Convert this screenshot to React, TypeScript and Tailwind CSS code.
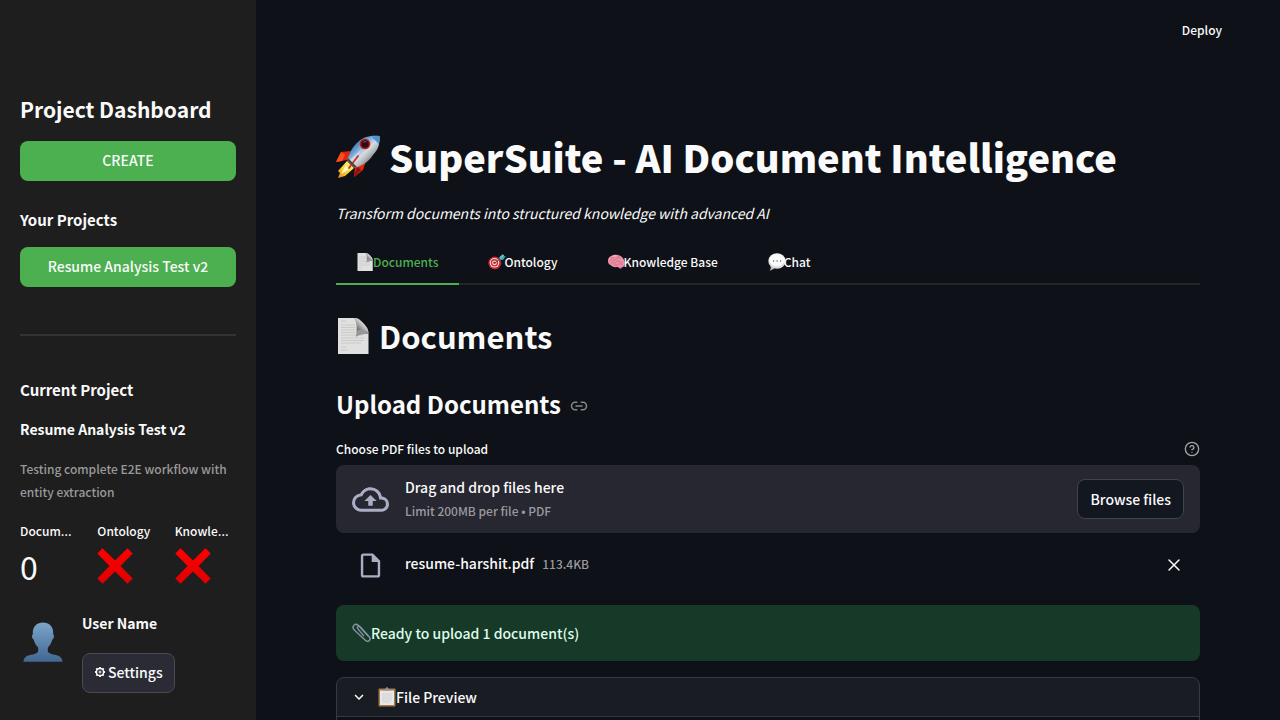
import type { ReactNode } from "react";
import { CircleHelp, Link2, X } from "lucide-react";
import { MdExpandMore, MdOutlineCloudUpload, MdOutlineInsertDriveFile } from "react-icons/md";

function Rocket() {
  return (
    <svg viewBox="0 0 44 44" className="h-11 w-11 shrink-0" aria-hidden="true">
      <defs>
        <linearGradient id="rk-body" x1="0.2" y1="0.2" x2="0.8" y2="0.8">
          <stop offset="0" stopColor="#2f69ad" />
          <stop offset="0.3" stopColor="#78a9d8" />
          <stop offset="0.55" stopColor="#d5dde2" />
          <stop offset="0.75" stopColor="#aeb4b6" />
          <stop offset="1" stopColor="#565c60" />
        </linearGradient>
        <linearGradient id="rk-flame" x1="1" y1="0" x2="0" y2="1">
          <stop offset="0" stopColor="#fff79a" />
          <stop offset="0.55" stopColor="#fbd534" />
          <stop offset="1" stopColor="#e8871a" />
        </linearGradient>
      </defs>
      <path d="M15 16 5 17 0 27l11-2z" fill="#e5220c" />
      <path d="M5 17 0 27l6-1 3-6z" fill="#f4511e" />
      <path d="m30 26-3 9-9 7 1-10z" fill="#e5220c" />
      <path d="m21 31 4 4-7 7z" fill="#8e1208" />
      <path d="M11 26 2 36l2 2-2 5 7-2 9-8z" fill="url(#rk-flame)" />
      <path d="m10 30-5 9 8-5z" fill="#fffbc8" />
      <path d="M43.500 1C34 0 27 2 22 7c-5 4-8 10-11 18l8 8c9-3 14-7 18-13 5-5 7-11 6.500-19z" fill="url(#rk-body)" />
      <path d="M35 1.500c3-.7 6-.7 8.500-.5.2 3 0 5-.6 8z" fill="#4f92d4" />
      <path d="m18 21 8-7-9 14-5-1z" fill="#f4f5f3" opacity="0.5" />
      <path d="m22 21-9 12" stroke="#c4352a" strokeWidth="1.800" strokeLinecap="round" />
      <path d="m11 25 8 8 2-1-9-9z" fill="#5c4037" />
      <circle cx="29" cy="9" r="5.300" fill="#c3180c" />
      <circle cx="29" cy="9" r="3.700" fill="#290c16" />
      <path d="M27 7.500c1-1 2.500-1.200 3.500-.5" stroke="#7e8ba0" strokeWidth="0.700" fill="none" />
    </svg>
  );
}

function PageSheet({ className }: { className: string }) {
  return (
    <svg viewBox="0 0 32 36" className={className} aria-hidden="true">
      <defs>
        <linearGradient id="sheet-fold" x1="0.2" y1="0.8" x2="0.8" y2="0.2">
          <stop offset="0" stopColor="#666" />
          <stop offset="0.5" stopColor="#b9b9b9" />
          <stop offset="1" stopColor="#fff" />
        </linearGradient>
      </defs>
      <path d="M1 0h17c3 0 5 2 7 4l5 6c1 2 1.500 3 1.500 6v20H1z" fill="#e0e0e0" />
      <path d="M4 3h5M4 7h14M4 9.500h14M4 12h14M4 14.500h14M4 17h22M4 20h23M4 22.500h23M4 25h20M4 29h5M4 32h7" stroke="#cacaca" strokeWidth="1" />
      <path d="M16 0c4 1 4 9 3 19 4-3 8-3 12.500-3C31 10 25 3 16 0z" fill="#666" opacity="0.6" />
      <path d="M17 0c3 3 3.500 7 3 12.500 4-1.500 8-.5 11.500 2C31 9 25 2 17 0z" fill="url(#sheet-fold)" />
    </svg>
  );
}

function Target() {
  return (
    <svg viewBox="0 0 18 18" className="-mr-0.5 h-[18px] w-[18px]" aria-hidden="true">
      <circle cx="6.800" cy="10" r="6.500" fill="#c9222d" />
      <circle cx="6.500" cy="9.800" r="4.800" fill="#f0e7e5" />
      <circle cx="6.500" cy="9.800" r="3.700" fill="#cf2934" />
      <circle cx="6.500" cy="9.800" r="2.400" fill="#f4e5e1" />
      <circle cx="6.500" cy="9.800" r="1.300" fill="#c92430" />
      <path d="m7 10 7-6" stroke="#3b5b65" strokeWidth="1" />
      <path d="M11 4.500 14.500 1l.8 2 2.400.3L15 7l-2.800-.2z" fill="#42a9b5" />
      <path d="m12 5 4-3" stroke="#81d7db" strokeWidth="1" />
    </svg>
  );
}

function Brain() {
  return (
    <svg viewBox="0 0 18 18" className="-mr-0.5 h-[18px] w-[18px]" aria-hidden="true">
      <path d="M11 12.500c0 1.500 1.200 3 2.700 3.700 1-.4.300-2 .8-3.200z" fill="#b25a6d" />
      <path d="M1 8C.8 5 3 2.800 6 2.200c4-1.100 8 .1 10 3.100 2 2.600 2.200 6.500.7 8.200-2 1.800-4.500 1.200-6.300.5C7 14.600 4.500 13.200 3.500 12 1.800 11.500.9 10 1 8z" fill="#ec8fa5" />
      <path d="M4 4.500c1.500-.5 2 1 3.500.3M2.500 7.500c2-1.500 3 .8 5-.2s1.500-2.800 4-2.300M4 10c1.500-.8 3 .8 4.500-.3S10 7 12 8s2 2 4 1M7 12.500c1.500-1.500 3 0 4.500-1.200s2.500-.2 4 .2M10 3c.5 1.500 2.500.5 3 2.200" fill="none" stroke="#c9687f" strokeWidth="0.700" />
      <path d="M5 3.500c1-.6 3-.9 4.500-.6M2 6.500l1-1.200" stroke="#ffc9d2" fill="none" strokeWidth="0.800" />
    </svg>
  );
}

function Bubble() {
  return (
    <svg viewBox="0 0 18 18" className="-mr-0.5 h-[18px] w-[18px]" aria-hidden="true">
      <path d="M2.500 13c.8 2-.1 3.500-.9 4.500 2.300-.3 4-1.200 4.700-2.500z" fill="#b9b9b9" />
      <ellipse cx="9" cy="8" rx="8.700" ry="7.800" fill="#dedede" />
      <ellipse cx="9" cy="7" rx="7.700" ry="6.300" fill="#fbfbfb" />
      <path d="M5 8h1.200M8.500 8h1.200M12 8h1.200" stroke="#777" strokeWidth="1.400" />
    </svg>
  );
}

function Cross() {
  return (
    <svg viewBox="0 0 36 36" className="h-9 w-9" role="img" aria-label="Not ready">
      <defs>
        <linearGradient id="cross-red" x1="0" y1="0" x2="0" y2="1">
          <stop offset="0" stopColor="#ff0000" />
          <stop offset="1" stopColor="#df0000" />
        </linearGradient>
      </defs>
      <path d="M5.500.3 18 12.500 30.500.3 35.700 5.500 23.500 18l12.200 12.500-5.200 5.200L18 23.500 5.500 35.700.3 30.500 12.500 18 .3 5.500z" fill="url(#cross-red)" />
    </svg>
  );
}

function Avatar() {
  return (
    <svg viewBox="0 0 40 40" className="h-10 w-10" aria-hidden="true">
      <defs>
        <linearGradient id="avatar-blue" x1="0" y1="0" x2="0" y2="1">
          <stop offset="0" stopColor="#7ba5c9" />
          <stop offset="1" stopColor="#426791" />
        </linearGradient>
      </defs>
      <path d="M20 .5c-6 0-10.200 4-10.200 10v2.300c-1 0-1 1.500-.5 3 .3 1.200.8 1.800 1.400 1.800.8 3.500 2.500 6.300 4.500 8.200v3c0 2-2 3-5.200 3.600C4.500 33.300.8 34.500.5 39.700h39c-.3-5.200-4-6.400-9.500-7.300-3.200-.6-5.200-1.600-5.200-3.600v-3c2-1.900 3.700-4.700 4.500-8.200.6 0 1.100-.6 1.400-1.800.5-1.500.5-3-.5-3v-2.300c0-6-4.200-10-10.200-10z" fill="url(#avatar-blue)" />
    </svg>
  );
}

function Gear() {
  return (
    <svg viewBox="0 0 12 12" className="h-3 w-3" fill="none" stroke="#fafafa" aria-hidden="true">
      <circle cx="6" cy="6" r="3.600" strokeWidth="1.500" />
      <circle cx="6" cy="6" r="1" strokeWidth="1" />
      <path d="M6 1v1.500M6 9.500V11M1 6h1.500M9.500 6H11M2.300 2.300l1.200 1.200M8.500 8.500l1.200 1.200M9.700 2.300 8.500 3.500M3.500 8.500 2.300 9.700" strokeWidth="1.800" />
    </svg>
  );
}

function Paperclip() {
  const wire = "M11.500 12.500 6 6C4.200 3.800 6.800 2 8.500 4l8.700 9.800c2.500 3.200-1.200 6.200-4 3.400L2.200 7C-.8 3.500 2.800-.3 6.200 2.200L16 13";
  return (
    <svg viewBox="0 0 20 20" className="-mr-px h-5 w-5" fill="none" strokeLinecap="round" aria-hidden="true">
      <path d={wire} stroke="#52646c" strokeWidth="1.800" />
      <path d={wire} stroke="#9aa8ae" strokeWidth="0.900" />
    </svg>
  );
}

function Clipboard() {
  return (
    <svg viewBox="0 0 18 20" className="h-5 w-[18px]" aria-hidden="true">
      <rect x="0.500" y="1.500" width="17" height="18" rx="1" fill="#a77a48" />
      <path d="M2 3.500h14v14.500H2z" fill="#e7e7e7" />
      <path d="M4 7h10M4 9h10M4 11h10M4 13h10M4 15h8" stroke="#cdcdcd" strokeWidth="0.800" />
      <path d="M5 3.500V2.200h2.600C7.600.8 8.200.3 9 .3s1.400.5 1.400 1.900H13v1.300z" fill="#8d9296" />
    </svg>
  );
}

function Metric({ label, shortened, children }: { label: string; shortened?: boolean; children: ReactNode }) {
  return (
    <div className="min-w-0">
      <dt className="text-xs leading-6 font-medium whitespace-nowrap">
        {label}
        {shortened && <span className="font-['Open_Sans',sans-serif] text-sm leading-none">…</span>}
      </dt>
      <dd className="flex h-[46px] items-center text-[32px] leading-[46px]">{children}</dd>
    </div>
  );
}

const tabs = [
  { name: "Documents", icon: <PageSheet className="h-[18px] w-4" /> },
  { name: "Ontology", icon: <Target /> },
  { name: "Knowledge Base", icon: <Brain /> },
  { name: "Chat", icon: <Bubble /> },
];

function Sidebar() {
  return (
    <aside className="w-64 shrink-0 bg-[#1e1e1e] px-5 pt-[91px]">
      <h2 className="text-[21px] leading-9 font-bold">Project Dashboard</h2>
      <button className="mt-[14px] h-10 w-full rounded-lg bg-[#4caf50] pb-0.5 text-sm font-medium">CREATE</button>
      <h3 className="mt-[27px] text-[15px] leading-6 font-bold">Your Projects</h3>
      <button className="mt-[15px] h-10 w-full rounded-lg bg-[#4caf50] pb-0.5 text-sm font-medium">
        Resume Analysis Test v2
      </button>
      <hr className="mt-[47px] border-t-2 border-[#333333]" />
      <h3 className="mt-[42px] text-[15px] leading-6 font-bold">Current Project</h3>
      <p className="mt-[15px] text-sm leading-6 font-bold">Resume Analysis Test v2</p>
      <p className="mt-4 text-xs leading-[23px] font-medium text-[#999999]">
        Testing complete E2E workflow with entity extraction
      </p>
      <dl className="mt-4 grid grid-cols-3 gap-4">
        <Metric label="Docum" shortened>0</Metric>
        <Metric label="Ontology"><Cross /></Metric>
        <Metric label="Knowle" shortened><Cross /></Metric>
      </dl>
      <div className="mt-[22px] flex gap-4">
        <div className="flex w-[46px] justify-center pt-[11px]"><Avatar /></div>
        <div>
          <p className="text-sm leading-6 font-bold">User Name</p>
          <button className="mt-[18px] flex h-10 items-center gap-0.5 rounded-lg border border-[#4a4a52] bg-[#2b2b36] px-[11px] pb-0.5 text-sm font-medium">
            <Gear />
            Settings
          </button>
        </div>
      </div>
    </aside>
  );
}

export default function App() {
  return (
    <div className="flex h-screen overflow-hidden bg-[#0e1117] font-['Noto_Sans_CJK_KR','Noto_Sans_CJK_SC',sans-serif] text-[#fafafa]">
      <Sidebar />
      <div className="min-w-0 flex-1">
        <header className="flex h-[60px] items-center justify-end pr-[58px]">
          <button className="text-xs font-medium">Deploy</button>
        </header>
        <main className="px-20 pt-[70px]">
          <h1 className="flex items-center gap-[9px] text-[38px] leading-[54px] font-black">
            <Rocket />
            SuperSuite - AI Document Intelligence
          </h1>
          <p className="mt-[17px] text-sm leading-6 italic">Transform documents into structured knowledge with advanced AI</p>
          <div role="tablist" className="mt-4 flex gap-2 border-b-2 border-[#24262c]">
            {tabs.map((tab, i) => (
              <button
                key={tab.name}
                role="tab"
                aria-selected={i === 0}
                className={
                  i === 0
                    ? "-mb-0.5 flex h-11 items-center border-b-2 border-[#4caf50] px-[21px] text-xs font-medium text-[#4caf50]"
                    : "flex h-[42px] items-center px-[21px] text-xs font-medium"
                }
              >
                {tab.icon}
                {tab.name}
              </button>
            ))}
          </div>
          <h2 className="mt-[29px] flex items-center gap-[9px] text-[31px] leading-[44px] font-bold">
            <PageSheet className="h-9 w-[34px]" />
            Documents
          </h2>
          <h3 className="mt-[29px] flex items-center gap-[9px] text-2xl leading-[34px] font-bold">
            Upload Documents
            <a href="#upload-documents" aria-label="Link to Upload Documents" className="pt-1 text-[#85878c]">
              <Link2 size={18} />
            </a>
          </h3>
          <div className="mt-[17px] flex items-center justify-between text-xs leading-[21px] font-medium">
            <label htmlFor="browse">Choose PDF files to upload</label>
            <button aria-label="Help" className="text-[#a3a5aa]"><CircleHelp size={16} /></button>
          </div>
          <section className="mt-1.5 flex h-[68px] items-center rounded-lg bg-[#262730] px-4">
            <MdOutlineCloudUpload size={37} className="mr-4 text-[#a9aec4]" />
            <div className="flex-1 font-medium">
              <p className="text-sm leading-6">Drag and drop files here</p>
              <p className="text-xs leading-6 text-[#999a9e]">Limit 200MB per file • PDF</p>
            </div>
            <button id="browse" className="h-10 rounded-lg border border-[#41444c] bg-[#131720] px-3 text-sm font-medium">
              Browse files
            </button>
          </section>
          <div className="flex h-16 items-center px-5">
            <MdOutlineInsertDriveFile size={29} className="mr-5 text-[#a9aec4]" />
            <p className="flex flex-1 items-baseline gap-2 pb-1 text-sm leading-6 font-medium">
              resume-harshit.pdf
              <span className="text-xs text-[#999a9e]">113.4KB</span>
            </p>
            <button aria-label="Remove file" className="-mr-1"><X size={20} strokeWidth={1.75} /></button>
          </div>
          <div role="status" className="mt-2 flex h-14 items-center rounded-lg bg-[#173928] px-4 text-sm font-medium text-[#dffde9]">
            <Paperclip />
            Ready to upload 1 document(s)
          </div>
          <section className="mt-4 rounded-lg border border-[#36393f] bg-[#1a1c24]">
            <button aria-expanded="true" className="flex h-[38px] w-full items-center px-[13px] text-sm font-medium">
              <MdExpandMore size={18} />
              <span className="ml-[10px] flex items-center"><Clipboard />File Preview</span>
            </button>
            <div className="h-10 rounded-b-lg border-t border-[#36393f] bg-[#0e1117]" />
          </section>
        </main>
      </div>
    </div>
  );
}
